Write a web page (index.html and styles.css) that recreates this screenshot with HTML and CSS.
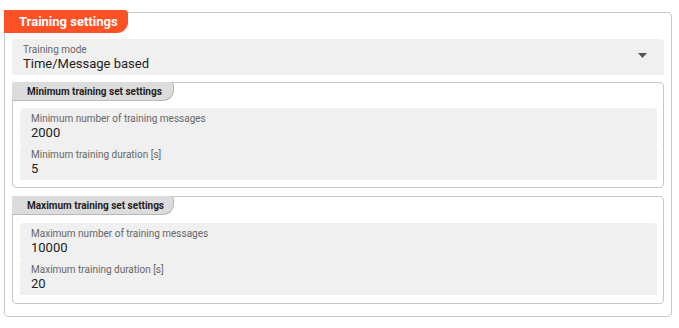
FILE: index.html
```html
<!DOCTYPE html>
<html>
<head>
<meta charset="utf-8">
<link rel="stylesheet" href="styles.css">
</head>
<body>
<div class="panel">
  <div class="panel-tab">Training settings</div>
  <div class="field select">
    <div class="field-text">
      <div class="label">Training mode</div>
      <div class="value">Time/Message based</div>
    </div>
    <svg class="caret" width="9" height="5" viewBox="0 0 9 5"><path d="M0 0L4.5 5L9 0Z" fill="#555"/></svg>
  </div>
  <div class="group">
    <div class="group-tab">Minimum training set settings</div>
    <div class="fields">
      <div class="field">
        <div class="label">Minimum number of training messages</div>
        <div class="value">2000</div>
      </div>
      <div class="field">
        <div class="label">Minimum training duration [s]</div>
        <div class="value">5</div>
      </div>
    </div>
  </div>
  <div class="group group-last">
    <div class="group-tab">Maximum training set settings</div>
    <div class="fields">
      <div class="field">
        <div class="label">Maximum number of training messages</div>
        <div class="value">10000</div>
      </div>
      <div class="field">
        <div class="label">Maximum training duration [s]</div>
        <div class="value">20</div>
      </div>
    </div>
  </div>
</div>
</body>
</html>
```

FILE: styles.css
```css
html, body {
  margin: 0;
  padding: 0;
  background: #fff;
  font-family: Roboto, "Liberation Sans", sans-serif;
  color: #222;
}
body {
  padding: 12px 7px 0 4px;
}
.panel {
  border: 1px solid #c8c8c8;
  border-radius: 4px;
  padding: 0 7px 12px 7px;
}
.panel-tab {
  width: 109px;
  height: 23px;
  margin: -3px 0 0 -8px;
  padding-left: 15px;
  background: #ff5126;
  color: #fff;
  font-weight: 700;
  font-size: 13px;
  line-height: 23px;
  border-radius: 0 4px 11px 0;
  white-space: nowrap;
}
.field {
  background: #f0f0f0;
  border-radius: 4px 4px 0 0;
  padding: 5px 11px 4px 11px;
}
.label {
  font-size: 10px;
  line-height: 12px;
  color: #666;
}
.value {
  font-size: 13px;
  line-height: 15px;
  color: #222;
}
.select {
  margin-top: 6px;
  display: flex;
  align-items: center;
  justify-content: space-between;
}
.caret {
  margin-right: 6px;
  margin-top: -4px;
}
.group {
  margin-top: 7px;
  border: 1px solid #c8c8c8;
  border-radius: 4px;
  padding: 0 6px 7px 7px;
}
.group + .group {
  margin-top: 8px;
}
.group-last {
  padding-bottom: 8px;
}
.group-last .fields {
  margin-top: 8px;
}
.group-tab {
  width: 146px;
  height: 18px;
  margin: -1px 0 0 -8px;
  padding-left: 15px;
  background: #dcdcdc;
  border-right: 1px solid #b8b8b8;
  border-bottom: 1px solid #b8b8b8;
  border-radius: 0 4px 11px 0;
  font-size: 10px;
  font-weight: 700;
  line-height: 19px;
  color: #222;
  white-space: nowrap;
}
.fields {
  margin-top: 7px;
  display: flex;
  flex-direction: column;
}
```
